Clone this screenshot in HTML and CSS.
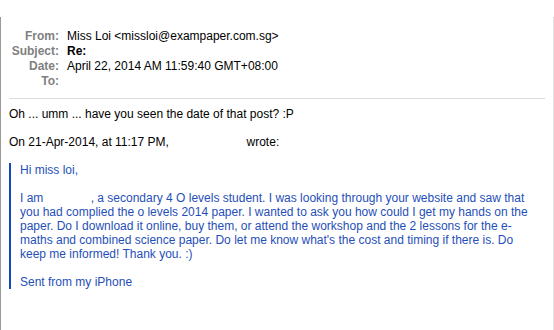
FILE: index.html
```html
<!DOCTYPE html>
<html lang="en">
<head>
    <meta charset="UTF-8">
    <meta name="viewport" content="width=device-width, initial-scale=1.0">
    <title>Re:</title>
    <link rel="stylesheet" href="styles.css">
</head>
<body>

<div class="message">
    <div class="headers">
        <div class="label">From:</div>
        <div class="value">Miss Loi &lt;missloi@exampaper.com.sg&gt;</div>
        <div class="label">Subject:</div>
        <div class="value subject">Re:</div>
        <div class="label">Date:</div>
        <div class="value">April 22, 2014 AM 11:59:40 GMT+08:00</div>
        <div class="label">To:</div>
        <div class="value"></div>
    </div>
    <hr class="divider">
    <div class="body">
        Oh ... umm ... have you seen the date of that post? :P<br>
        <br>
        On 21-Apr-2014, at 11:17 PM, <span class="hidden-name wide"></span> wrote:<br>
        <br>
        <blockquote class="quote">
            Hi miss loi,<br>
            <br>
            I am <span class="hidden-name"></span>, a secondary 4 O levels student. I was looking through your website and saw that you had complied the o levels 2014 paper. I wanted to ask you how could I get my hands on the paper. Do I download it online, buy them, or attend the workshop and the 2 lessons for the e-maths and combined science paper. Do let me know what's the cost and timing if there is. Do keep me informed! Thank you. :)<br>
            <br>
            Sent from my iPhone
        </blockquote>
    </div>
</div>

</body>
</html>
```

FILE: styles.css
```css
body {
    margin: 0;
    font-family: "Liberation Sans", Arial, Helvetica, sans-serif;
    font-size: 12px;
    color: #000;
    background-color: white;
}
.message {
    margin-top: 17px;
    min-height: 313px;
    padding: 12px 8px 0 8px;
    border-left: 1px solid #9a9a9a;
    border-right: 1px solid #e2e2e2;
}
.headers {
    display: grid;
    grid-template-columns: 50px auto;
    column-gap: 8px;
    line-height: 15px;
}
.label {
    text-align: right;
    font-weight: bold;
    color: #7f7f7f;
}
.subject {
    font-weight: bold;
}
.value {
    min-height: 15px;
}
.divider {
    border: none;
    border-top: 1px solid #dcdcdc;
    margin: 9px 0 8px 0;
}
.body {
    line-height: 14px;
}
.hidden-name {
    display: inline-block;
    width: 44px;
}
.hidden-name.wide {
    width: 71px;
}
.quote {
    margin: 0;
    padding-left: 9px;
    padding-right: 10px;
    border-left: 2px solid #1448b8;
    color: #1f4fb9;
}
```
